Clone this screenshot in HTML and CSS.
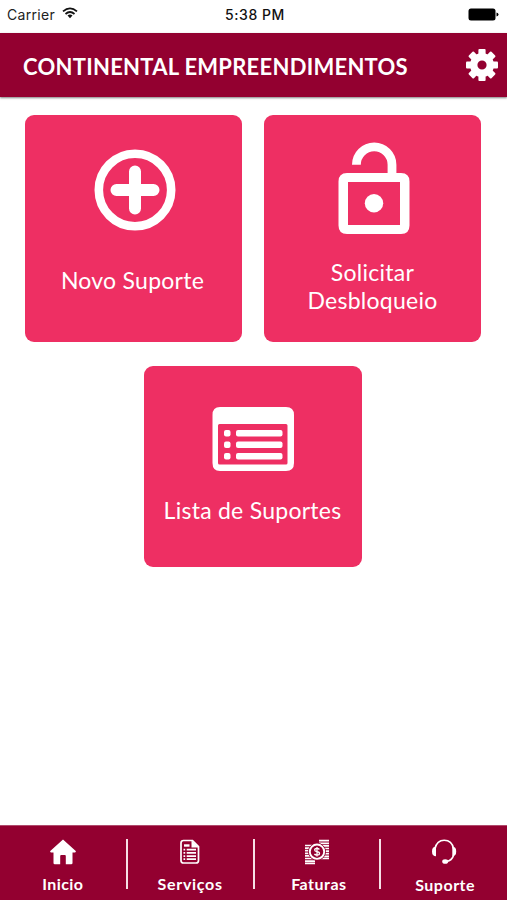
FILE: index.html
```html
<!DOCTYPE html>
<html lang="pt-BR">
<head>
<meta charset="utf-8">
<title>Continental Empreendimentos</title>
<link rel="stylesheet" href="styles.css">
</head>
<body>
<div class="app">
  <div class="status">
    <div class="status-left"><span class="carrier">Carrier</span>
      <svg class="wifi" width="16" height="12" viewBox="0 0 16 12" fill="none" stroke="#111" stroke-width="1.7"><path d="M1 4.400Q8-1.800 15 4.400M3.500 7Q8 3 12.500 7"/><path d="M5.500 8.600Q8 6.600 10.500 8.600L8 11.300Z" fill="#111" stroke="none"/></svg>
    </div>
    <span class="time">5:38 PM</span>
    <svg class="battery" width="31" height="13" viewBox="0 0 31 13"><rect x=".5" y=".5" width="27" height="12" rx="2.5"/><path d="M28.5 4.5Q30.5 5 30.5 6.5T28.5 8.5Z"/></svg>
  </div>
  <header class="header">
    <h1 class="title">CONTINENTAL EMPREENDIMENTOS</h1>
    <svg class="gear" width="32" height="32" viewBox="-16 -16 32 32" fill="#fff">
      <path fill-rule="evenodd" d="M0-12A12 12 0 1 1 0 12A12 12 0 1 1 0-12ZM0-4.6A4.6 4.6 0 1 0 0 4.6A4.6 4.6 0 1 0 0-4.6Z"/>
      <g id="teeth"><rect x="-3.6" y="-16" width="7.2" height="6" rx="1"/><rect x="-3.6" y="10" width="7.2" height="6" rx="1"/><rect x="-16" y="-3.6" width="6" height="7.2" rx="1"/><rect x="10" y="-3.6" width="6" height="7.2" rx="1"/></g>
      <use href="#teeth" transform="rotate(45)"/>
    </svg>
  </header>
  <main class="cards">
    <section class="card card-new">
      <svg width="82" height="82" viewBox="0 0 82 82" fill="none" stroke="#fff"><circle cx="41" cy="41" r="36.2" stroke-width="8.6"/><path d="M41 22.5V59.5M22.5 41H59.5" stroke-width="12" stroke-linecap="round"/></svg>
      <p class="label label-new">Novo Suporte</p>
    </section>
    <section class="card card-unlock">
      <svg width="72" height="93" viewBox="0 0 72 93" fill="none" stroke="#fff"><path d="M18.4 22.7A17.8 17.8 0 0 1 54 22.7V35" stroke-width="8.8"/><path fill="#fff" fill-rule="evenodd" stroke="none" d="M9 31H63Q71.5 31 71.5 39.500V83.500Q71.500 92 63 92H9Q.5 92 .5 83.500V39.500Q.5 31 9 31ZM10 40V83H62V40Z"/><circle cx="36" cy="61.300" r="9.200" fill="#fff" stroke="none"/></svg>
      <p class="label label-unlock">Solicitar<br>Desbloqueio</p>
    </section>
    <section class="card card-list">
      <svg width="82" height="64" viewBox="0 0 82 64" fill="#fff"><path fill-rule="evenodd" d="M8 0H74Q82 0 82 8V56Q82 64 74 64H8Q.5 64 .5 56V8Q.5 0 8 0ZM7.500 17Q6 17 6 18.500V56Q6 57.500 7.500 57.500H74Q75.500 57.500 75.500 56V18.500Q75.500 17 74 17Z"/><g><rect x="12" y="23" width="6.500" height="6.500" rx="2"/><rect x="12" y="34.500" width="6.500" height="6.500" rx="2"/><rect x="12" y="46" width="6.500" height="6.500" rx="2"/><rect x="24" y="23" width="46.500" height="6.500" rx="2"/><rect x="24" y="34.500" width="46.500" height="6.500" rx="2"/><rect x="24" y="46" width="46.500" height="6.500" rx="2"/></g></svg>
      <p class="label label-list">Lista de Suportes</p>
    </section>
  </main>
  <nav class="nav">
    <a class="tab">
      <svg width="26" height="26" viewBox="0 0 26 26" fill="#fff"><path d="M13 .5L26 12.200L25.200 13.500H22.500V24Q22.500 25.300 21.200 25.300H15.800V17Q15.800 16 14.800 16H11.200Q10.200 16 10.200 17V25.300H4.800Q3.500 25.300 3.500 24V13.500H.8L0 12.200Z"/></svg>
      <span class="tab-text inicio">Inicio</span>
    </a>
    <a class="tab">
      <svg width="26" height="26" viewBox="0 0 26 26" fill="none" stroke="#fff"><path d="M6.500 1.500H15.500L21.500 7.500V21.500Q21.500 24 19 24H6.500Q4 24 4 21.500V4Q4 1.500 6.500 1.500Z" stroke-width="1.700"/><path d="M14.500 1L22 8.500H14.500Z" fill="#fff" stroke="none"/><path d="M7 6.500H12.500" stroke-width="2.400"/><path d="M6.500 10.700H8.200M9.700 10.700H19M6.500 13.900H8.200M9.700 13.900H19M6.500 17.100H8.200M9.700 17.100H19M6.500 20.200H8.200M9.700 20.200H19" stroke-width="1.700"/></svg>
      <span class="tab-text servicos">Serviços</span>
    </a>
    <a class="tab">
      <svg width="26" height="26" viewBox="0 0 26 26" fill="none" stroke="#fff"><path d="M15 1.700H25M15 4.300H25M17 6.900H25M20 9.500H25M20 12.100H25M20 14.700H25M19 17.300H25M16 19.500H25M1 6.500H10M1 9.100H8M1 11.700H6M1 14.300H6M1 16.900H7M1 19.500H9M1 22.100H11M1 24.300H11" stroke-width="1.700"/><circle cx="13" cy="12.700" r="8.500" fill="#930030" stroke="#930030"/><circle cx="13" cy="12.700" r="7.200" stroke-width="1.900"/><path d="M15.400 10.500Q14.600 9.400 13 9.400Q10.700 9.400 10.700 11Q10.700 12.400 13 12.700Q15.500 13.100 15.500 14.500Q15.500 16.100 13 16.100Q11.200 16.100 10.400 15M13 8V17.500" stroke-width="1.300"/></svg>
      <span class="tab-text faturas">Faturas</span>
    </a>
    <a class="tab">
      <svg width="26" height="26" viewBox="0 0 26 26" fill="none" stroke="#fff"><path d="M4 9.500C5.200 4.200 8.500 1.200 13.200 1.200S21.500 4.200 22.500 9.500M22.500 16.500Q21 21.500 15.500 22.500" stroke-width="1.600"/><path d="M5 7.500V17.200Q1 17 1 12.400T5 7.500ZM21.300 7.500V17.200Q25.200 17 25.200 12.400T21.300 7.500Z" fill="#fff" stroke="none"/><ellipse cx="14.200" cy="22.500" rx="3" ry="2.300" fill="#fff" stroke="none"/></svg>
      <span class="tab-text suporte">Suporte</span>
    </a>
  </nav>
</div>
</body>
</html>
```

FILE: styles.css
```css
* { box-sizing: border-box; }
body { margin: 0; background: #fff; font-family: Lato, "Liberation Sans", sans-serif; }
h1, p { margin: 0; }
svg { display: block; flex: none; }
.app { display: flex; flex-direction: column; width: 507px; height: 900px; }
.status { display: grid; grid-template-columns: 1fr auto 1fr; align-items: center; height: 33px; padding: 0 8px 5px 7px; font-family: Inter, "Liberation Sans", sans-serif; font-size: 14px; color: #222; }
.status-left { display: flex; align-items: center; gap: 7px; }
.wifi { margin-top: -2px; }
.carrier { letter-spacing: .3px; }
.time { font-weight: 500; color: #111; letter-spacing: .55px; padding-left: 4px; }
.battery { justify-self: end; }
.header { display: flex; align-items: center; justify-content: space-between; height: 64px; padding: 0 9px 0 23px; background: #930030; box-shadow: 0 1px 2px rgba(0, 0, 0, .5); color: #fff; }
.title { padding-top: 4px; font-size: 22px; line-height: 28px; font-weight: 700; letter-spacing: .26px; white-space: nowrap; }
.cards { flex: 1; display: flex; flex-wrap: wrap; justify-content: center; align-content: flex-start; gap: 24px 22px; padding: 18px 1px 0 0; }
.card { display: flex; flex-direction: column; align-items: center; width: 217px; height: 227px; border-radius: 9px; background: #ee2f63; color: #fff; }
.card-new { padding: 34px 0 0 2px; }
.card-unlock { padding: 27px 0 0 2px; }
.card-list { width: 218px; height: 201px; padding: 41px 0 0; }
.label { font-size: 23px; line-height: 28px; letter-spacing: .26px; text-align: center; white-space: nowrap; }
.label-new { margin: 35px 4px 0 0; }
.label-unlock { margin: 23px 2px 0 0; }
.label-list { margin: 25px 1px 0 0; }
.nav { display: grid; grid-template-columns: repeat(4, 1fr); height: 75px; background: #930030; color: #fff; border-top: 1px solid #b04a6c; }
.tab { position: relative; display: flex; flex-direction: column; align-items: center; padding-top: 13px; }
.tab + .tab::before { content: ""; position: absolute; left: -1px; top: 13px; width: 2px; height: 50px; background: #f6dfe6; }
.tab-text { margin-top: 9px; font-size: 16px; line-height: 20px; font-weight: 700; letter-spacing: .5px; }
.inicio { margin-right: 1px; letter-spacing: .4px; }
.servicos { letter-spacing: .7px; }
.faturas { margin-left: 4px; }
.suporte { margin: 10px 0 0 3px; }
```
